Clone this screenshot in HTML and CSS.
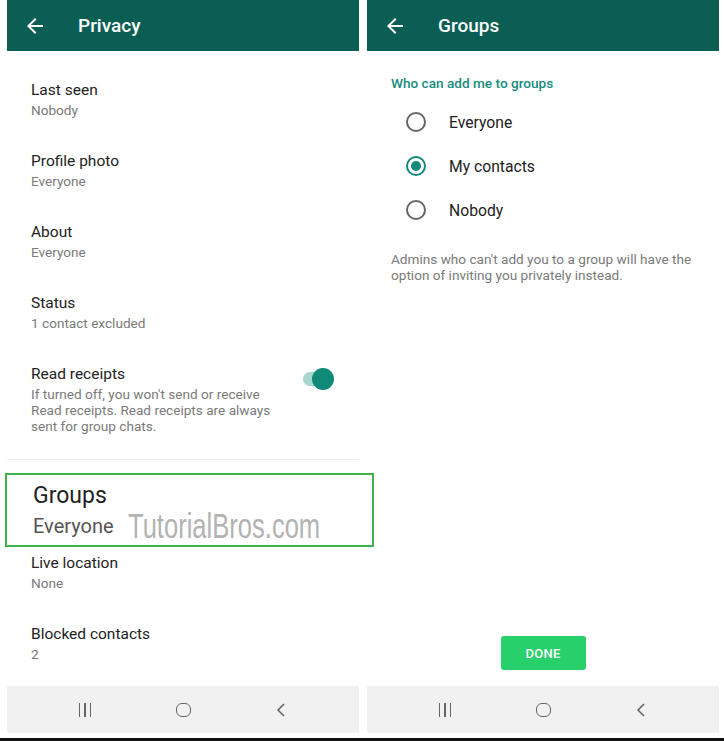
FILE: index.html
```html
<!DOCTYPE html>
<html lang="en">
<head>
    <meta charset="UTF-8">
    <title>Privacy - Groups</title>
    <link rel="stylesheet" href="styles.css">
</head>
<body>

<div class="screens">
    <div class="phone">
        <div class="appbar">
            <svg class="back" viewBox="0 0 24 24" width="24" height="24"><path d="M20 11H7.83l5.59-5.59L12 4l-8 8 8 8 1.41-1.41L7.83 13H20v-2z" fill="#fff"/></svg>
            <span class="appbar-title">Privacy</span>
        </div>
        <div class="content settings">
            <div class="item">
                <div class="item-title">Last seen</div>
                <div class="item-sub">Nobody</div>
            </div>
            <div class="item">
                <div class="item-title">Profile photo</div>
                <div class="item-sub">Everyone</div>
            </div>
            <div class="item">
                <div class="item-title">About</div>
                <div class="item-sub">Everyone</div>
            </div>
            <div class="item">
                <div class="item-title">Status</div>
                <div class="item-sub">1 contact excluded</div>
            </div>
            <div class="item item-toggle">
                <div>
                    <div class="item-title">Read receipts</div>
                    <div class="item-desc">If turned off, you won't send or receive<br>Read receipts. Read receipts are always<br>sent for group chats.</div>
                </div>
                <div class="switch"><span class="thumb"></span></div>
            </div>
            <div class="groups-slot">
                <div class="highlight">
                    <div class="hl-title">Groups</div>
                    <div class="hl-row">
                        <span class="hl-sub">Everyone</span>
                        <span class="watermark">TutorialBros.com</span>
                    </div>
                </div>
            </div>
            <div class="item">
                <div class="item-title">Live location</div>
                <div class="item-sub">None</div>
            </div>
            <div class="item">
                <div class="item-title">Blocked contacts</div>
                <div class="item-sub">2</div>
            </div>
        </div>
        <div class="navbar">
            <span class="nav-icon"><span class="bars"><i></i><i></i><i></i></span></span>
            <span class="nav-icon"><span class="home"></span></span>
            <span class="nav-icon"><svg viewBox="0 0 12 16" width="12" height="16"><polyline points="9,2 3,8 9,14" fill="none" stroke="#666" stroke-width="1.6"/></svg></span>
        </div>
    </div>

    <div class="phone">
        <div class="appbar">
            <svg class="back" viewBox="0 0 24 24" width="24" height="24"><path d="M20 11H7.83l5.59-5.59L12 4l-8 8 8 8 1.41-1.41L7.83 13H20v-2z" fill="#fff"/></svg>
            <span class="appbar-title">Groups</span>
        </div>
        <div class="content options">
            <div class="section-label">Who can add me to groups</div>
            <div class="radio-group">
                <label class="radio"><span class="circle"></span>Everyone</label>
                <label class="radio"><span class="circle checked"></span>My contacts</label>
                <label class="radio"><span class="circle"></span>Nobody</label>
            </div>
            <p class="note">Admins who can't add you to a group will have the<br>option of inviting you privately instead.</p>
            <div class="spacer"></div>
            <button type="button" class="done-button">DONE</button>
        </div>
        <div class="navbar">
            <span class="nav-icon"><span class="bars"><i></i><i></i><i></i></span></span>
            <span class="nav-icon"><span class="home"></span></span>
            <span class="nav-icon"><svg viewBox="0 0 12 16" width="12" height="16"><polyline points="9,2 3,8 9,14" fill="none" stroke="#666" stroke-width="1.6"/></svg></span>
        </div>
    </div>
</div>
<div class="bottom-line"></div>

</body>
</html>
```
FILE: styles.css
```css
body {
    margin: 0;
    background: #fff;
    font-family: Roboto, "Liberation Sans", sans-serif;
    color: #212121;
}
.screens {
    display: flex;
    gap: 8px;
    padding-left: 7px;
}
.phone {
    width: 352px;
    height: 733px;
    display: flex;
    flex-direction: column;
}
.appbar {
    height: 51px;
    flex: none;
    background-color: #0a5e54;
    display: flex;
    align-items: center;
    padding-left: 16px;
}
.appbar-title {
    margin-left: 31px;
    color: #fff;
    font-size: 19px;
    font-weight: 500;
}
.content {
    flex: 1;
    display: flex;
    flex-direction: column;
}

/* privacy list */
.settings {
    padding-top: 19px;
}
.item {
    height: 71px;
    box-sizing: border-box;
    padding: 10px 26px 0 24px;
}
.item-title {
    font-size: 15.5px;
    line-height: 20px;
    color: #222;
}
.item-sub {
    font-size: 13.6px;
    line-height: 20px;
    color: #7a7a7a;
}
.item-toggle {
    height: auto;
    display: flex;
    justify-content: space-between;
    padding-right: 28px;
    padding-bottom: 25px;
    border-bottom: 1px solid #ececec;
}
.item-desc {
    margin-top: 2px;
    font-size: 13.6px;
    line-height: 16px;
    color: #7a7a7a;
}
.switch {
    position: relative;
    width: 28px;
    height: 14px;
    margin-top: 8px;
    border-radius: 7px;
    background-color: #a7d6ce;
}
.switch .thumb {
    position: absolute;
    right: -3px;
    top: -4px;
    width: 22px;
    height: 22px;
    border-radius: 50%;
    background-color: #0f8a78;
}
.groups-slot {
    position: relative;
    height: 83px;
}
.highlight {
    position: absolute;
    top: 13px;
    left: -2px;
    width: 369px;
    height: 74px;
    box-sizing: border-box;
    border: 2px solid #3fb24c;
    background: #fff;
    padding: 7px 0 0 26px;
}
.hl-title {
    font-size: 23px;
    line-height: 28px;
    color: #222;
}
.hl-row {
    display: flex;
    align-items: center;
    height: 31px;
}
.hl-sub {
    font-size: 20px;
    color: #555;
}
.watermark {
    margin-left: 14px;
    font-family: "Liberation Sans", sans-serif;
    font-size: 35px;
    color: #b3b3b3;
    transform: scaleX(0.73);
    transform-origin: left center;
    white-space: nowrap;
}

/* nav bar */
.navbar {
    height: 47px;
    flex: none;
    background-color: #f1f1f1;
    display: flex;
    justify-content: center;
    align-items: center;
    gap: 68px;
}
.nav-icon {
    width: 30px;
    display: flex;
    justify-content: center;
    align-items: center;
}
.bars {
    display: flex;
    gap: 4px;
}
.bars i {
    width: 1.6px;
    height: 14px;
    background: #666;
}
.home {
    width: 13px;
    height: 12px;
    border: 1.6px solid #666;
    border-radius: 6px;
}

/* groups options */
.options {
    padding: 22px 0 0 24px;
}
.section-label {
    font-size: 13.6px;
    line-height: 20px;
    font-weight: 500;
    color: #168c7c;
}
.radio-group {
    margin-top: 7px;
    padding-left: 15px;
}
.radio {
    height: 44px;
    display: flex;
    align-items: center;
    font-size: 15.7px;
    color: #222;
}
.circle {
    width: 20px;
    height: 20px;
    box-sizing: border-box;
    border: 2px solid #666;
    border-radius: 50%;
    margin-right: 23px;
    display: flex;
    justify-content: center;
    align-items: center;
}
.circle.checked {
    border-color: #138a7a;
}
.circle.checked::after {
    content: "";
    width: 10px;
    height: 10px;
    border-radius: 50%;
    background: #138a7a;
}
.note {
    margin: 19px 0 0;
    font-size: 13.6px;
    line-height: 16px;
    color: #7a7a7a;
}
.spacer {
    flex: 1;
}
.done-button {
    align-self: center;
    margin: 0 24px 16px 0;
    width: 85px;
    height: 34px;
    border: none;
    border-radius: 3px;
    background-color: #27d06a;
    color: #fff;
    font-family: Roboto, "Liberation Sans", sans-serif;
    font-size: 13px;
    font-weight: 500;
    letter-spacing: 0.3px;
}
.bottom-line {
    margin-top: 5px;
    height: 3px;
    background: #111;
}
```
